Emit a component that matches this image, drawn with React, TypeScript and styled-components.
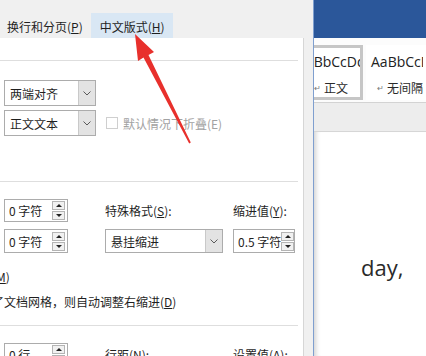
import React from 'react';
import styled, { createGlobalStyle } from 'styled-components';

const GlobalStyle = createGlobalStyle`
  html, body {
    margin: 0;
    padding: 0;
    background: #fff;
  }
  body {
    font-family: "Noto Sans CJK SC", "Noto Sans", sans-serif;
  }
`;

const Screen = styled.div`
  position: relative;
  width: 426px;
  height: 356px;
  overflow: hidden;
  display: flex;
  font-family: "Noto Sans CJK SC", "Noto Sans", sans-serif;
  font-size: 12px;
  color: #1f1f1f;
`;

// ---- paragraph dialog ----

const Dialog = styled.div`
  width: 313px;
  flex: none;
  display: flex;
  flex-direction: column;
  background: #f0f0f0;
`;

const TabBar = styled.div`
  display: flex;
  height: 25px;
  margin-top: 13px;
  flex: none;
`;

const Tab = styled.div<{ $active?: boolean; $first?: boolean }>`
  display: flex;
  align-items: center;
  padding: 2px 8px 0 ${p => (p.$first ? 7 : 9)}px;
  white-space: nowrap;
  background: ${p => (p.$active ? '#d9e7f4' : 'transparent')};
`;

const Panel = styled.div`
  flex: 1;
  background: #fff;
  margin-right: 9px;
  border-right: 1px solid #d6d6d6;
  display: flex;
  flex-direction: column;
  padding: 0 5px 0 4px;
  overflow: hidden;
`;

const Divider = styled.div<{ $top: number }>`
  height: 1px;
  flex: none;
  background: #dedede;
  margin: ${p => p.$top}px 0 0 -4px;
`;

const Row = styled.div<{ $top: number; $h: number }>`
  display: flex;
  align-items: center;
  flex: none;
  margin-top: ${p => p.$top}px;
  height: ${p => p.$h}px;
`;

const Cell = styled.div<{ $w: number }>`
  width: ${p => p.$w}px;
  height: 100%;
  flex: none;
  display: flex;
  align-items: center;
`;

const Label = styled.span`
  white-space: nowrap;
`;

const Select = styled.div<{ $w: number }>`
  width: ${p => p.$w}px;
  height: 100%;
  box-sizing: border-box;
  border: 1px solid #acacac;
  background: #fff;
  display: flex;
`;

const SelectValue = styled.span`
  flex: 1;
  padding-left: 5px;
  display: flex;
  align-items: center;
  white-space: nowrap;
`;

const SelectArrow = styled.div`
  width: 16px;
  background: #e3e3e3;
  border-left: 1px solid #c9c9c9;
  display: flex;
  align-items: center;
  justify-content: center;
`;

const Spinner = styled.div<{ $w: number; $tight?: boolean }>`
  width: ${p => p.$w}px;
  height: 100%;
  box-sizing: border-box;
  border: 1px solid #acacac;
  background: #fff;
  display: flex;
  align-items: center;
  padding: 0 ${p => (p.$tight ? 0 : 2)}px 0 4px;
`;

const SpinText = styled.span`
  flex: 1;
  white-space: nowrap;
`;

const SpinButtons = styled.div`
  display: flex;
  flex-direction: column;
  gap: 1px;
`;

const SpinButton = styled.div<{ $down?: boolean }>`
  width: 13px;
  height: 9px;
  box-sizing: border-box;
  border: 1px solid #b4b4b4;
  background: #f1f1f1;
  display: flex;
  align-items: center;
  justify-content: center;
  &::after {
    content: '';
    border-left: 3px solid transparent;
    border-right: 3px solid transparent;
    ${p => (p.$down ? 'border-top: 3px solid #222;' : 'border-bottom: 3px solid #222;')}
  }
`;

const CheckBox = styled.span`
  width: 12px;
  height: 12px;
  box-sizing: border-box;
  border: 1px solid #cfcfcf;
  background: #fff;
  margin: 0 5px 0 10px;
  flex: none;
`;

const Disabled = styled.span`
  color: #a2a2a2;
  white-space: nowrap;
`;

// lines whose start lies left of the visible area
const CutLine = styled.div<{ $top: number }>`
  margin: ${p => p.$top}px 0 0 -60px;
  height: 16px;
  line-height: 16px;
  white-space: nowrap;
  flex: none;
`;

// ---- word window ----

const Word = styled.div`
  flex: 1;
  display: flex;
  flex-direction: column;
  border-left: 1px solid #7f9fcf;
  overflow: hidden;
`;

const TitleBar = styled.div`
  height: 38px;
  flex: none;
  background: #2b579a;
`;

const Ribbon = styled.div`
  height: 65px;
  flex: none;
  box-sizing: border-box;
  background: #fcfcfc;
  border-bottom: 1px solid #d3d3d3;
  display: flex;
  gap: 3px;
  padding-top: 7px;
`;

const StyleItem = styled.div<{ $selected?: boolean; $shift?: number }>`
  width: 60px;
  height: 55px;
  flex: none;
  box-sizing: border-box;
  margin-left: ${p => p.$shift ?? 0}px;
  border: 3px solid ${p => (p.$selected ? '#c6c6c6' : 'transparent')};
  background: #fff;
  overflow: hidden;
  display: flex;
  flex-direction: column;
`;

const Sample = styled.div<{ $indent: number }>`
  margin: 6px 0 0 ${p => p.$indent}px;
  height: 16px;
  line-height: 16px;
  white-space: nowrap;
  font-family: "Open Sans", "Liberation Sans", sans-serif;
  font-size: 14px;
  color: #222;
`;

const StyleName = styled.div`
  margin: 10px 0 0 8px;
  height: 16px;
  line-height: 16px;
  white-space: nowrap;
  display: flex;
  align-items: center;
  gap: 3px;
  color: #2a2a2a;
`;

const ParaMark = styled.span`
  font-size: 8px;
  color: #777;
`;

const RulerBand = styled.div`
  height: 28px;
  flex: none;
  background: #ededed;
  border-bottom: 1px solid #d6d6d6;
`;

const Document = styled.div`
  flex: 1;
  background: #fff;
  box-shadow: inset 6px 0 5px -4px rgba(0, 0, 0, 0.18);
  padding: 124px 0 0 47px;
`;

const DocText = styled.div`
  font-family: "Open Sans", "Liberation Sans", sans-serif;
  font-size: 22px;
  line-height: 22px;
  color: #2a2a2a;
`;

const Overlay = styled.svg`
  position: absolute;
  left: 0;
  top: 0;
  pointer-events: none;
`;

const Chevron = () => (
  <svg width="8" height="5" viewBox="0 0 8 5">
    <polyline points="0.5,0.5 4,4 7.5,0.5" fill="none" stroke="#5a5a5a" strokeWidth="1" />
  </svg>
);

const Spin: React.FC<{ value: string; w: number; tight?: boolean }> = ({ value, w, tight }) => (
  <Spinner $w={w} $tight={tight}>
    <SpinText>{value}</SpinText>
    <SpinButtons>
      <SpinButton />
      <SpinButton $down />
    </SpinButtons>
  </Spinner>
);

const DropDown: React.FC<{ value: string; w: number }> = ({ value, w }) => (
  <Select $w={w}>
    <SelectValue>{value}</SelectValue>
    <SelectArrow>
      <Chevron />
    </SelectArrow>
  </Select>
);

export default function App() {
  return (
    <>
      <GlobalStyle />
      <Screen>
        <Dialog>
          <TabBar>
            <Tab $first>
              换行和分页(<u>P</u>)
            </Tab>
            <Tab $active>
              中文版式(<u>H</u>)
            </Tab>
          </TabBar>
          <Panel>
            <Divider $top={22} />
            <Row $top={19} $h={26}>
              <DropDown value="两端对齐" w={92} />
            </Row>
            <Row $top={4} $h={26}>
              <DropDown value="正文文本" w={92} />
              <CheckBox />
              <Disabled>默认情况下折叠(E)</Disabled>
            </Row>
            <Divider $top={45} />
            <Row $top={17} $h={23}>
              <Cell $w={101}>
                <Spin value="0 字符" w={64} />
              </Cell>
              <Cell $w={128}>
                <Label>
                  特殊格式(<u>S</u>):
                </Label>
              </Cell>
              <Cell $w={64}>
                <Label>
                  缩进值(<u>Y</u>):
                </Label>
              </Cell>
            </Row>
            <Row $top={7} $h={24}>
              <Cell $w={101}>
                <Spin value="0 字符" w={64} />
              </Cell>
              <Cell $w={128}>
                <DropDown value="悬挂缩进" w={118} />
              </Cell>
              <Cell $w={64}>
                <Spin value="0.5 字符" w={62} tight />
              </Cell>
            </Row>
            <CutLine $top={16}>
              对称缩进(<u>M</u>)
            </CutLine>
            <CutLine $top={9}>
              如果定义了文档网格，则自动调整右缩进(<u>D</u>)
            </CutLine>
            <Divider $top={15} />
            <Row $top={17} $h={23}>
              <Cell $w={101}>
                <Spin value="0 行" w={64} />
              </Cell>
              <Cell $w={128}>
                <Label>
                  行距(<u>N</u>):
                </Label>
              </Cell>
              <Cell $w={64}>
                <Label>
                  设置值(<u>A</u>):
                </Label>
              </Cell>
            </Row>
          </Panel>
        </Dialog>

        <Word>
          <TitleBar />
          <Ribbon>
            <StyleItem $selected $shift={-11}>
              <Sample $indent={-9}>AaBbCcDd</Sample>
              <StyleName>
                <ParaMark>↵</ParaMark>正文
              </StyleName>
            </StyleItem>
            <StyleItem>
              <Sample $indent={2}>AaBbCcDd</Sample>
              <StyleName>
                <ParaMark>↵</ParaMark>无间隔
              </StyleName>
            </StyleItem>
          </Ribbon>
          <RulerBand />
          <Document>
            <DocText>day,</DocText>
          </Document>
        </Word>

        <Overlay width="426" height="356" viewBox="0 0 426 356">
          <polygon
            points="135,34 154,52 148.5,55 190.8,142.6 189.2,143.4 143.5,57.5 138,61"
            fill="#e8302c"
          />
        </Overlay>
      </Screen>
    </>
  );
}
